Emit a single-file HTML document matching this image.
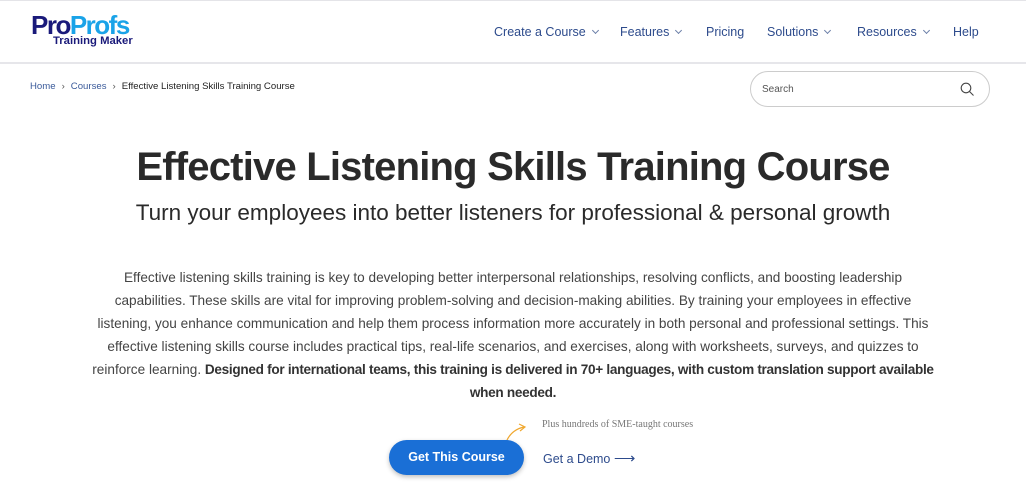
<!DOCTYPE html>
<html><head><meta charset="utf-8"><style>
*{margin:0;padding:0;box-sizing:border-box}
body{width:1026px;height:501px;overflow:hidden;background:#fff;font-family:"Liberation Sans",Arial,sans-serif;position:relative}
.top{position:absolute;left:0;top:0;width:1026px;height:1px;background:#e4e4e8}
.hdr{position:absolute;left:0;top:62px;width:1026px;height:2px;background:#e6e6ea}
.logo1{position:absolute;left:31px;top:10px;font-size:26px;font-weight:bold;letter-spacing:-1.5px;line-height:30px}
.logo1 .a{color:#1a1a7a}.logo1 .b{color:#1aa3e8}
.logo2{position:absolute;left:53px;top:35px;font-size:11.3px;font-weight:bold;color:#1a1a7a}
.nav{position:absolute;top:25px;font-size:12.5px;color:#2d4b8c}
.chev{display:inline-block;width:5px;height:5px;border-right:1px solid #6b7fa8;border-bottom:1px solid #6b7fa8;transform:rotate(45deg);margin-left:7px;position:relative;top:-3px}
.bc{position:absolute;left:30px;top:81px;font-size:9.6px;color:#3a5a9a}
.bc span.s{color:#555;margin:0 6px}
.bc .cur{color:#222}
.search{position:absolute;left:750px;top:71px;width:240px;height:36px;border:1px solid #ccc;border-radius:18px}
.search span{position:absolute;left:11px;top:12px;font-size:10px;color:#555}
h1{position:absolute;left:0;width:1026px;top:145px;text-align:center;font-size:40px;font-weight:bold;color:#2a2a2a;letter-spacing:-0.8px}
h2{position:absolute;left:0;width:1026px;top:200px;text-align:center;font-size:22.5px;font-weight:normal;color:#2a2a2a}
p{position:absolute;left:13px;width:1000px;top:266px;text-align:center;font-size:13.6px;line-height:23px;color:#444;white-space:nowrap}
p b{color:#333;letter-spacing:-0.3px}
.btn{position:absolute;left:389px;top:440px;width:135px;height:35px;border-radius:18px;background:#1a6fd6;color:#fff;font-size:12.5px;font-weight:bold;text-align:center;line-height:35px;box-shadow:0 2px 5px rgba(0,0,0,.25)}
.demo{position:absolute;left:543px;top:449px;font-size:12.5px;color:#2d4b8c}
.plus{position:absolute;left:542px;top:419px;font-size:10px;color:#777;font-family:"Liberation Serif",serif}
</style></head><body>
<div class="top"></div>
<div class="logo1"><span class="a">Pro</span><span class="b">Profs</span></div>
<div class="logo2">Training Maker</div>
<div class="nav" style="left:494px">Create a Course<i class="chev"></i></div>
<div class="nav" style="left:620px">Features<i class="chev"></i></div>
<div class="nav" style="left:706px">Pricing</div>
<div class="nav" style="left:767px">Solutions<i class="chev"></i></div>
<div class="nav" style="left:857px">Resources<i class="chev"></i></div>
<div class="nav" style="left:953px">Help</div>
<div class="hdr"></div>
<div class="bc">Home<span class="s">›</span>Courses<span class="s">›</span><span class="cur">Effective Listening Skills Training Course</span></div>
<div class="search"><span>Search</span>
<svg style="position:absolute;left:209px;top:10px" width="15" height="15" viewBox="0 0 15 15"><circle cx="6" cy="6" r="4.8" fill="none" stroke="#444" stroke-width="1.1"/><path d="M9.5 9.5L13.5 13.5" stroke="#444" stroke-width="1.1"/></svg></div>
<h1>Effective Listening Skills Training Course</h1>
<h2>Turn your employees into better listeners for professional &amp; personal growth</h2>
<p>Effective listening skills training is key to developing better interpersonal relationships, resolving conflicts, and boosting leadership<br>capabilities. These skills are vital for improving problem-solving and decision-making abilities. By training your employees in effective<br>listening, you enhance communication and help them process information more accurately in both personal and professional settings. This<br>effective listening skills course includes practical tips, real-life scenarios, and exercises, along with worksheets, surveys, and quizzes to<br>reinforce learning. <b>Designed for international teams, this training is delivered in 70+ languages, with custom translation support available<br>when needed.</b></p>
<svg style="position:absolute;left:505px;top:420px" width="26" height="22" viewBox="0 0 26 22"><path d="M2 20C5 14 10 9 19 7" fill="none" stroke="#f0a830" stroke-width="1.2"/><path d="M14 4L20 7L15 11" fill="none" stroke="#f0a830" stroke-width="1.2"/></svg>
<div class="plus">Plus hundreds of SME-taught courses</div>
<div class="btn">Get This Course</div>
<div class="demo">Get a Demo <span style="font-size:15px">⟶</span></div>
</body></html>
